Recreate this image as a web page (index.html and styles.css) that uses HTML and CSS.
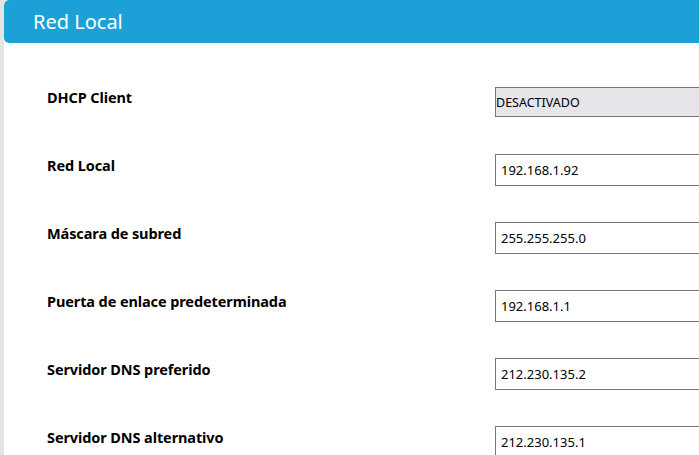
FILE: index.html
```html
<!DOCTYPE html>
<html lang="es">
<head>
    <meta charset="UTF-8">
    <meta name="viewport" content="width=device-width, initial-scale=1.0">
    <title>Red Local</title>
    <link rel="stylesheet" href="styles.css">
</head>
<body>
    <div id="panel">
        <div class="panel-title">Red Local</div>

        <form class="lan-form">
            <div class="row row-first">
                <label class="row-label" for="dhcp">DHCP Client</label>
                <input class="field field-off" id="dhcp" type="text" value="DESACTIVADO" readonly>
            </div>
            <div class="row">
                <label class="row-label" for="lanIp">Red Local</label>
                <input class="field" id="lanIp" type="text" value="192.168.1.92">
            </div>
            <div class="row">
                <label class="row-label" for="mask">Máscara de subred</label>
                <input class="field" id="mask" type="text" value="255.255.255.0">
            </div>
            <div class="row">
                <label class="row-label" for="gateway">Puerta de enlace predeterminada</label>
                <input class="field" id="gateway" type="text" value="192.168.1.1">
            </div>
            <div class="row">
                <label class="row-label" for="dns1">Servidor DNS preferido</label>
                <input class="field" id="dns1" type="text" value="212.230.135.2">
            </div>
            <div class="row">
                <label class="row-label" for="dns2">Servidor DNS alternativo</label>
                <input class="field" id="dns2" type="text" value="212.230.135.1">
            </div>
        </form>
    </div>
</body>
</html>
```

FILE: styles.css
```css
body {
    background-color: #e5e4e2;
    margin: 0;
    padding: 0;
    overflow: hidden;
    font-family: 'Noto Sans', 'Open Sans', sans-serif;
    color: #000;
}

#panel {
    margin-left: 4px;
    height: 455px;
    overflow: hidden;
    background-color: #fff;
    border-radius: 5px 0 0 0;
}

.panel-title {
    height: 43px;
    line-height: 43px;
    padding-left: 29px;
    background-color: #1ba1d8;
    color: #fff;
    font-size: 20px;
    border-radius: 5px 0 0 5px;
}

.lan-form {
    padding: 43px 0 0 43px;
    margin: 0;
}

.row {
    display: flex;
    align-items: flex-start;
    height: 68px;
}

.row-label {
    width: 448px;
    flex-shrink: 0;
    margin-top: 1px;
    font-size: 14.5px;
    font-weight: bold;
    letter-spacing: -0.1px;
    line-height: 20px;
}

.field {
    box-sizing: border-box;
    width: 260px;
    height: 32px;
    flex-shrink: 0;
    padding: 0 0 0 5px;
    border: 1px solid #787878;
    border-radius: 0;
    background-color: #fff;
    color: #000;
    font-family: 'Noto Sans', sans-serif;
    font-size: 13px;
    outline: none;
}

.field-off {
    height: 30px;
    margin-top: 1px;
    padding-left: 0;
    background-color: #e6e5ea;
    font-size: 12.5px;
}
```
